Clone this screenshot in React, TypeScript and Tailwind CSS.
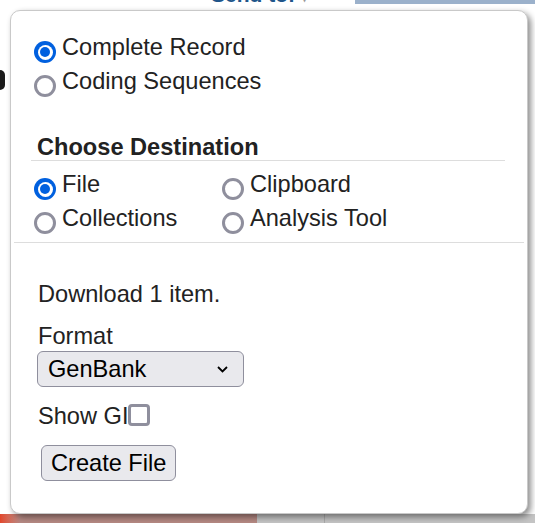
import { ReactNode } from "react";

// Radio en estilo Firefox
function Radio({ checked }: { checked?: boolean }) {
  if (checked) {
    return (
      <span className="mt-[7px] flex h-[22px] w-[22px] shrink-0 items-center justify-center rounded-full bg-[#0060df]">
        <span className="flex h-[15px] w-[15px] items-center justify-center rounded-full bg-white">
          <span className="h-[10px] w-[10px] rounded-full bg-[#0060df]" />
        </span>
      </span>
    );
  }
  return <span className="mt-[7px] h-[22px] w-[22px] shrink-0 rounded-full border-[3px] border-[#8f8f9d] bg-white" />;
}

function Opcion({ checked, children }: { checked?: boolean; children: ReactNode }) {
  return (
    <label className="flex h-[34px] items-start">
      <Radio checked={checked} />
      <span className="ml-[6px] whitespace-nowrap leading-[26px]">{children}</span>
    </label>
  );
}

export default function App() {
  return (
    <div className="relative h-[523px] w-[535px] overflow-hidden bg-white font-['Liberation_Sans',Arial,sans-serif] text-[23.6px] text-[#222]">
      {/* Página de fondo */}
      <div className="flex h-full flex-col">
        <div className="flex h-[4px]">
          <div className="w-[355px]">
            <div className="ml-[211px] mt-[-16px] whitespace-nowrap text-[21px] font-bold leading-[22px] text-[#20558a]">
              Send to: <span className="text-[14px] text-[#999]">▾</span>
            </div>
          </div>
          <div className="flex-1 bg-[#9bb1cb]" />
        </div>
        <div className="mt-[66px] h-[20px] w-[5px] rounded-r-full bg-[#1a1a1a]" />
        <div className="flex-1" />
        <div className="flex h-[9px]">
          <div className="w-[20px] bg-gradient-to-r from-[#e2462a] to-[#b98681]" />
          <div className="w-[237px] bg-[#b58983]" />
          <div className="w-[68px] border-r border-[#aaa] bg-[#c4c4c4]" />
          <div className="flex-1 bg-[#c4c4c4]" />
        </div>
      </div>

      {/* Ventana emergente */}
      <div className="absolute left-[10px] top-[10px] flex h-[504px] w-[518px] flex-col rounded-[10px] border border-[#c9c9c9] bg-white shadow-[3px_3px_6px_rgba(0,0,0,0.45)]">
        <div className="pl-[23px] pt-[23px]">
          <Opcion checked>Complete Record</Opcion>
          <Opcion>Coding Sequences</Opcion>
        </div>

        <h3 className="ml-[20px] mt-[32px] h-[27px] w-[474px] border-b border-[#dddddd] pl-[6px] font-bold leading-[26px]">
          Choose Destination
        </h3>

        <div className="mt-[10px] grid grid-cols-[188px_auto] pl-[23px]">
          <Opcion checked>File</Opcion>
          <Opcion>Clipboard</Opcion>
          <Opcion>Collections</Opcion>
          <Opcion>Analysis Tool</Opcion>
        </div>

        <div className="mx-[3px] mt-[3px] border-t border-[#dddddd]" />

        <div className="flex flex-col items-start pl-[26px] pt-[38px] leading-[26px]">
          <p className="ml-[1px]">Download 1 item.</p>
          <p className="ml-[1px] mt-[16px]">Format</p>
          <div className="mt-[2px] flex h-[36px] w-[207px] items-center justify-between rounded-[6px] border border-[#8f8f9d] bg-[#e9e9ed] pl-[10px] pr-[15px] text-black">
            <span>GenBank</span>
            <svg width="11" height="7" viewBox="0 0 11 7" fill="none">
              <path d="M1 1l4.5 4.5L10 1" stroke="#000" strokeWidth="1.8" />
            </svg>
          </div>
          <div className="ml-[1px] mt-[16px] flex items-start">
            <span>Show GI</span>
            <span className="mt-[1px] h-[22px] w-[22px] rounded-[4px] border-[3px] border-[#8f8f9d] bg-white" />
          </div>
          <button className="ml-[4px] mt-[16px] h-[36px] rounded-[6px] border border-[#8f8f9d] bg-[#e9e9ed] px-[9px] leading-[26px] text-black">
            Create File
          </button>
        </div>
      </div>
    </div>
  );
}
